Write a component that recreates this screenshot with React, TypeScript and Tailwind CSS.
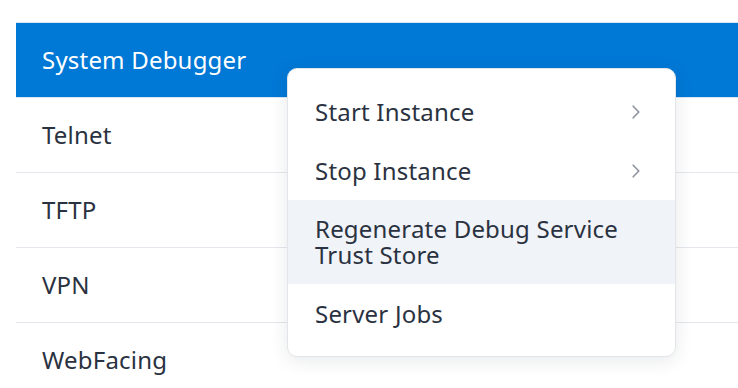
import React from "react";

const rows = ["Telnet", "TFTP", "VPN", "WebFacing"];

function Chevron() {
  return (
    <svg width="8" height="14" viewBox="0 0 8 14" fill="none" className="shrink-0">
      <path d="M1.2 1.2 L6.8 7 L1.2 12.8" stroke="#8b929c" strokeWidth="1.6" strokeLinecap="round" strokeLinejoin="round" />
    </svg>
  );
}

export default function App() {
  const font = { fontFamily: '"Noto Sans", "Open Sans", Arial, sans-serif' };
  return (
    <div className="relative w-[738px] h-[388px] overflow-hidden bg-white" style={font}>
      <div className="pt-[22px] pl-[16px]">
        <div className="border-t border-[#d4e6f7]">
          <div className="h-[74px] bg-[#0078d6] flex items-center pl-[26px] text-white text-[24px] tracking-[0.2px]">
            System Debugger
          </div>
          <div className="h-px bg-[#d4e6f7]" />
          {rows.map((r) => (
            <div
              key={r}
              className="h-[75px] border-b border-[#e4e7eb] flex items-center pl-[26px] text-[24px] tracking-[0.2px] text-[#2a3241]"
            >
              {r}
            </div>
          ))}
        </div>
      </div>

      <div className="absolute left-[287px] top-[68px] w-[389px] rounded-[10px] border border-[#e2e5e9] bg-white shadow-[0_4px_18px_rgba(30,40,60,0.10)] py-[13px] text-[24px] leading-[26px] tracking-[0.2px] text-[#2a3241]">
        <div className="h-[59px] flex items-center justify-between pl-[27px] pr-[35px]">
          <span>Start Instance</span>
          <Chevron />
        </div>
        <div className="h-[59px] flex items-center justify-between pl-[27px] pr-[35px]">
          <span>Stop Instance</span>
          <Chevron />
        </div>
        <div className="h-[84px] flex items-center pl-[27px] pr-[20px] bg-[#f0f3f7]">
          <span>
            Regenerate Debug Service
            <br />
            Trust Store
          </span>
        </div>
        <div className="h-[59px] flex items-center pl-[27px] pr-[35px]">
          <span>Server Jobs</span>
        </div>
      </div>
    </div>
  );
}
